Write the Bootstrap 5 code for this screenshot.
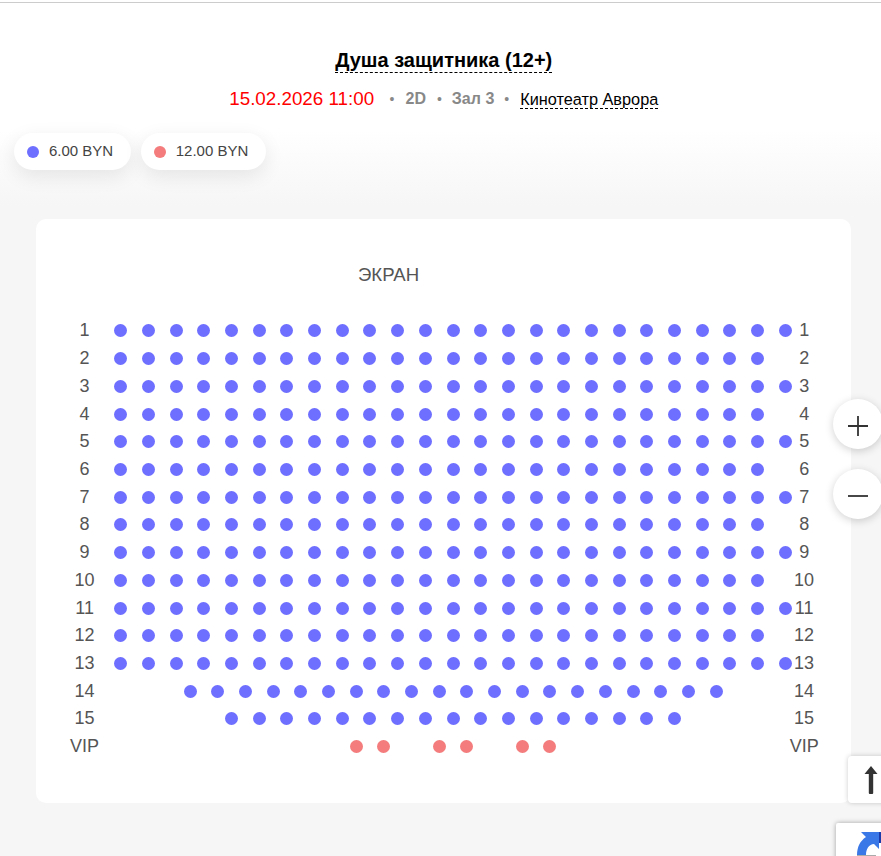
<!DOCTYPE html>
<html lang="ru">
<head>
<meta charset="utf-8">
<title>Душа защитника</title>
<link href="https://cdn.jsdelivr.net/npm/bootstrap@5.3.0/dist/css/bootstrap.min.css" rel="stylesheet">
<style>
html,body{height:856px;overflow:hidden}
body{font-family:"Liberation Sans",Arial,sans-serif;background:linear-gradient(#fff 0,#fff 130px,#f6f6f6 205px,#f6f6f6 100%);color:#444}
.topline{height:3px;border-bottom:1px solid #ccc}
.head-block{padding-top:46px;height:127px;margin-left:6.5px}
.movie-title{font-size:20px;font-weight:700;line-height:23px;color:#000;border-bottom:1px dashed #000;display:inline-block;text-decoration:none}
.info-line{margin-top:13px;font-size:16px;line-height:24px;gap:0}
.show-date{font-size:18.8px;color:#f00;margin-right:5.5px}
.muted-bit{font-weight:700;color:#888}
.muted-first{margin:0 1px}
.sep-dot{color:#888;margin:0 10px;font-size:14px}
.venue{font-size:16.3px;color:#000;border-bottom:1px dashed #000;line-height:18px;text-decoration:none;margin-left:1px}
.chips{padding-left:14px;gap:10px;margin-top:3px}
.price-chip{height:37px;border-radius:19px;background:#fff;box-shadow:0 6px 20px rgba(0,0,0,.09);font-size:15px;color:#444;padding:0 17.5px 0 13px;gap:10px}
.price-dot{width:12px;height:12px;border-radius:50%}
.hall-card{margin:49px 30px 0 36px;height:584px;background:#fff;border-radius:10px;padding:42px 0 0 26.3px}
.screen-label{font-size:18.6px;line-height:28px;color:#555;margin-left:295.7px;margin-bottom:28px}
.seat-row{height:27.73px;align-items:center}
.row-num{font-size:18px;color:#555;width:44.65px;flex:none;white-space:nowrap;justify-content:center}
.row-num-end{width:10px}
.seat-grid{display:grid;grid-template-columns:repeat(50,13.85px);flex:none;align-items:center}
.seat-dot{grid-column-end:span 2;width:13px;height:13px;border-radius:50%;justify-self:center;background:#6e6eff}
.seat-dot.vip,.price-dot.vip{background:#f47c7c}
.price-dot.std{background:#6e6eff}
.round-tool{position:fixed;left:833px;width:50px;height:50px;border-radius:50%;background:#fff;box-shadow:0 2px 8px rgba(0,0,0,.18);border:0;padding:4px 0 0}
.tool-plus{top:399px}
.tool-minus{top:469px}
.to-top{position:fixed;left:848px;top:756px;width:40px;height:47px;background:#fff;border-radius:4px;box-shadow:0 0 5px rgba(0,0,0,.2);padding:0 0 0 15px}
.captcha{position:fixed;left:836px;top:823px;width:60px;height:50px;background:#fff;border-radius:2px;box-shadow:0 0 5px rgba(0,0,0,.35);overflow:hidden}
</style>
</head>
<body>
<div class="topline"></div>
<header class="head-block text-center">
  <a class="movie-title" href="#">Душа защитника (12+)</a>
  <div class="info-line d-flex justify-content-center align-items-center">
    <span class="show-date">15.02.2026 11:00</span>
    <span class="sep-dot">•</span><span class="muted-bit muted-first">2D</span>
    <span class="sep-dot">•</span><span class="muted-bit">Зал 3</span>
    <span class="sep-dot">•</span><a class="venue" href="#">Кинотеатр Аврора</a>
  </div>
</header>
<div class="chips d-flex">
  <div class="price-chip d-flex align-items-center"><span class="price-dot std"></span>6.00 BYN</div>
  <div class="price-chip d-flex align-items-center"><span class="price-dot vip"></span>12.00 BYN</div>
</div>
<main class="hall-card">
  <div class="screen-label">ЭКРАН</div>
  <div id="hall"></div>
</main>
<button class="round-tool tool-plus d-flex align-items-center justify-content-center" aria-label="plus">
  <svg width="20" height="20" viewBox="0 0 20 20"><path d="M0 10H20M10 0V20" stroke="#333" stroke-width="1.8"/></svg>
</button>
<button class="round-tool tool-minus d-flex align-items-center justify-content-center" aria-label="minus">
  <svg width="20" height="20" viewBox="0 0 20 20"><path d="M0 10H20" stroke="#333" stroke-width="1.8"/></svg>
</button>
<div class="to-top d-flex align-items-center">
  <svg width="16" height="28" viewBox="0 0 16 28"><path d="M8 0L14.5 8H10.2V27Q10.2 28 9.2 28H6.8Q5.8 28 5.8 27V8H1.5Z" fill="#333"/></svg>
</div>
<div class="captcha">
  <svg width="60" height="50" viewBox="0 0 60 50"><path d="M21 32C21 24 24 18 30 14L25 9H43V26L38 21C33 21 30 26 30 32Z" fill="#3b78e7"/><path d="M43 9H60V20H43Z" fill="#1c3aa9"/><rect x="21" y="32" width="19" height="4" fill="#ababab"/></svg>
</div>
<script>
var html='';
function row(label,seats,vip){
  var s='';
  seats.forEach(function(c){s+='<span class="seat-dot'+(vip?' vip':'')+'" style="grid-column-start:'+c+'"></span>';});
  return '<div class="seat-row d-flex"><div class="row-num d-flex">'+label+'</div><div class="seat-grid">'+s+'</div><div class="row-num row-num-end d-flex">'+label+'</div></div>';
}
function range(n,start){var a=[];for(var i=0;i<n;i++)a.push(start+2*i);return a;}
for(var r=1;r<=13;r++)html+=row(r,range(r%2?25:24,1));
html+=row(14,range(20,6));
html+=row(15,range(17,9));
html+=row('VIP',[18,20,24,26,30,32],true);
document.getElementById('hall').innerHTML=html;
</script>
</body>
</html>
